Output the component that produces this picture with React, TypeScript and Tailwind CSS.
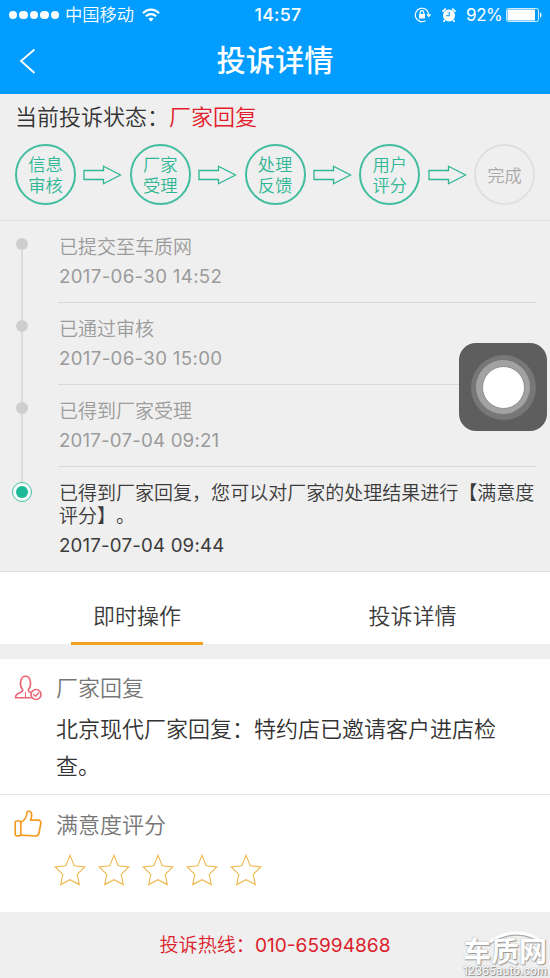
import React from "react";

const steps = [
  { a: "信息", b: "审核", done: true },
  { a: "厂家", b: "受理", done: true },
  { a: "处理", b: "反馈", done: true },
  { a: "用户", b: "评分", done: true },
  { a: "完成", b: "", done: false },
];

const events = [
  { text: "已提交至车质网", date: "2017-06-30 14:52" },
  { text: "已通过审核", date: "2017-06-30 15:00" },
  { text: "已得到厂家受理", date: "2017-07-04 09:21" },
  {
    text: "已得到厂家回复，您可以对厂家的处理结果进行【满意度评分】。",
    date: "2017-07-04 09:44",
  },
];

function StatusBar() {
  return (
    <div className="flex h-[30px] items-center pl-[9px] pr-[8px] text-[17.3px] leading-[30px]">
      <div className="flex w-[243px] items-center">
        <div className="flex gap-[2px]">
          {[0, 1, 2, 3, 4].map((i) => (
            <span key={i} className="size-[8.4px] rounded-full bg-white" />
          ))}
        </div>
        <span className="ml-[6px]">中国移动</span>
        <svg className="ml-[8px]" width="18" height="14" viewBox="0 0 18 14" fill="none" stroke="white" strokeWidth="2.2">
          <path d="M1 5.2C5.5.4 12.500.4 17 5.200" />
          <path d="M3.900 8.300c2.900-2.900 7.300-2.900 10.200 0" />
          <path d="M9 13.600 6.300 10.800c1.500-1.400 3.900-1.400 5.400 0Z" fill="white" stroke="none" />
        </svg>
      </div>
      <span className="w-[52px] text-center text-[17.8px] font-medium tracking-[0.300px]">14:57</span>
      <div className="flex flex-1 items-center justify-end">
        <svg width="18" height="16" viewBox="0 0 18 16" fill="none" stroke="white" strokeWidth="1.200">
          <path d="M14.700 7.500A6.700 6.700 0 1 0 11.500 13.700" />
          <path d="m12.200 7.200 2.600 3.200 2.500-3.200Z" fill="white" stroke="none" />
          <rect x="5" y="7" width="6" height="4.500" fill="white" stroke="none" />
          <path d="M6.200 7.200V5.500a1.800 1.800 0 0 1 3.600 0v1.700" />
        </svg>
        <svg className="ml-[9px]" width="16" height="16" viewBox="0 0 16 16">
          <circle cx="8" cy="8.400" r="6" fill="white" />
          <path d="M1.400 4.600 4.800 1.600M14.600 4.600l-3.400-3M3.800 13l-1.300 1.700M12.200 13l1.300 1.700" stroke="white" strokeWidth="1.700" />
          <path d="M8.200 4.700v4H5" stroke="#0a9cfa" strokeWidth="1.100" fill="none" />
        </svg>
        <span className="ml-[9px] w-[36px] text-[17px] tracking-[-0.4px]">92%</span>
        <svg className="ml-[4px]" width="36" height="14" viewBox="0 0 36 14">
          <rect x=".5" y=".5" width="32" height="13" rx="1.800" fill="none" stroke="white" strokeOpacity=".8" />
          <rect x="1.500" y="1.500" width="27.500" height="11" rx=".8" fill="white" />
          <path d="M34 4.500c2 .5 2 4.500 0 5Z" fill="white" />
        </svg>
      </div>
    </div>
  );
}

function Header() {
  return (
    <header className="h-[94px] bg-[#039dff] text-white">
      <StatusBar />
      <div className="flex h-[62px] items-center">
        <svg className="ml-[19px]" width="18" height="26" viewBox="0 0 18 26" fill="none" stroke="white" strokeWidth="1.800">
          <path d="M15.500 1.500 2 13l13.500 12" />
        </svg>
        <h1 className="mr-[37px] flex-1 text-center font-['Inter','Noto_Sans_CJK_SC',sans-serif] text-[29.300px] font-medium leading-[62px]">投诉详情</h1>
      </div>
    </header>
  );
}

function StepArrow() {
  return (
    <svg width="39" height="20" viewBox="0 0 39 20" fill="none" stroke="#2fb795" strokeWidth="1.300">
      <path d="M1 5.500h19.500V1.200L37.500 10 20.500 18.800v-4.300H1Z" />
    </svg>
  );
}

function Progress() {
  return (
    <section className="h-[127px] border-b border-[#e1e1e1] px-[15px]">
      <p className="pt-[7px] text-[22px] leading-[32px]">
        当前投诉状态：<span className="text-[#e31c2b]">厂家回复</span>
      </p>
      <div className="mt-[11px] flex items-center justify-between">
        {steps.map((s, i) => (
          <React.Fragment key={s.a}>
            {i > 0 && <StepArrow />}
            <div
              className={
                "flex size-[61px] flex-col items-center justify-center rounded-full border-2 pt-px text-[17.300px] leading-[21px] " +
                (s.done ? "border-[#43bd9f] text-[#2fb795]" : "border-[#dfdfdf] text-[#aaaaaa]")
              }
            >
              <span>{s.a}</span>
              {s.b && <span>{s.b}</span>}
            </div>
          </React.Fragment>
        ))}
      </div>
    </section>
  );
}

function Timeline() {
  return (
    <section className="h-[351px] border-b border-[#e1e1e1]">
      {events.map((e, i) => {
        const last = i === events.length - 1;
        return (
          <div key={e.date} className="flex pr-[14px]">
            <div className="flex w-[44px] flex-col items-center">
              <span className={"w-[1.500px] " + (last ? "h-[15px] " : "h-[17px] ") + (i > 0 ? "bg-[#dcdcdc]" : "")} />
              {last ? (
                <span className="flex size-[20px] items-center justify-center rounded-full border border-[#48bea2] bg-[#f3fcfa]">
                  <span className="size-[12px] rounded-full bg-[#1eb899]" />
                </span>
              ) : (
                <>
                  <span className="size-[12px] rounded-full bg-[#cecece]" />
                  <span className="w-[1.500px] flex-1 bg-[#dcdcdc]" />
                </>
              )}
            </div>
            <div
              className={
                "ml-[14px] flex-1 pt-[15px] text-[19.030px] leading-[23px] " +
                (last ? "text-[#3b3b3b]" : "h-[82px] border-b border-[#d9d9d9] text-[#9b9b9b]")
              }
            >
              <p className="pl-px [text-spacing-trim:space-all]">{e.text}</p>
              <p className={"mt-[6px] pl-px text-[18.700px] " + (i > 1 ? "tracking-[0.180px]" : "tracking-[0.320px]")}>{e.date}</p>
            </div>
          </div>
        );
      })}
    </section>
  );
}

function Tabs() {
  return (
    <nav className="flex h-[72px] bg-white text-[22px] leading-[88px] text-[#3b3b3b]">
      <div className="flex w-1/2 flex-col items-center pr-px">
        <span className="h-[70px]">即时操作</span>
        <span className="h-[3px] w-[132px] shrink-0 bg-[#f1a01f]" />
      </div>
      <div className="w-1/2 text-center">投诉详情</div>
    </nav>
  );
}

function Reply() {
  return (
    <section className="flex h-[136px] border-b border-[#e6e6e6] bg-white pl-[14px]">
      <svg className="mt-[16px] shrink-0" width="29" height="26" viewBox="0 0 29 26" fill="none" stroke="#ea6474" strokeWidth="1.600" strokeLinecap="round" strokeLinejoin="round">
        <path d="M17 22.800H1.500C1.300 19.200 4 18.400 6.500 17.400 9.400 16.300 8.900 14.600 7.800 13.200 5.600 10.400 5.800 1.200 11.500 1.200s5.900 9.200 3.700 12c-1.200 1.600-1.600 3 1.300 4.200" />
        <path d="m11.500 17.500v4" strokeWidth="1.100" />
        <circle cx="22" cy="19.500" r="5" />
        <path d="m19.500 19.500 2 1.700 3.200-3.500" strokeWidth="1.300" />
      </svg>
      <div className="ml-[13px] w-[450px] text-[22px]">
        <h2 className="pt-[11px] leading-[36px] text-[#777777]">厂家回复</h2>
        <p className="mt-[5px] leading-[37px] text-[#333333]">北京现代厂家回复：特约店已邀请客户进店检查。</p>
      </div>
    </section>
  );
}

function Rating() {
  return (
    <section className="h-[117px] bg-white pl-[14px]">
      <div className="flex items-start">
        <svg className="mt-[15px]" width="29" height="28" viewBox="0 0 29 28" fill="none" stroke="#f39b24" strokeWidth="1.700" strokeLinejoin="round">
          <rect x="1.200" y="11" width="5.600" height="14.800" rx="1.500" />
          <path d="M6.800 12.500c3.400-1.800 5.600-5 6.200-9.500.3-2.700 4.300-2.300 4.600 1.300.2 2.300-.4 4.300-1 5.900h7.300c2.500 0 3.200 1.500 2.900 3.200l-1.800 9.600c-.4 2.100-1.400 3-3.400 3L6.800 25.200" />
        </svg>
        <h2 className="ml-[13px] pt-[12px] text-[22px] leading-[36px] text-[#777777]">满意度评分</h2>
      </div>
      <div className="ml-[40px] mt-[11px] flex gap-[12px]">
        {[0, 1, 2, 3, 4].map((i) => (
          <svg key={i} width="32" height="32" viewBox="0 0 32 32" fill="none" stroke="#efb84c" strokeWidth="1.100">
            <path d="m16 1.300 4.200 10.400 10.600 1.200-7.600 7.500 2.100 10.200L16 25.700l-9.300 4.900 2.100-10.200L1.200 12.900l10.600-1.200Z" />
          </svg>
        ))}
      </div>
    </section>
  );
}

function AssistiveTouch() {
  return (
    <div className="absolute left-[459px] top-[343px] flex size-[88px] items-center justify-center rounded-[17px] bg-[#5e5e5e]">
      <div className="flex size-[65px] items-center justify-center rounded-full bg-[#777777]">
        <div className="flex size-[54px] items-center justify-center rounded-full bg-[#a2a2a2]">
          <div className="size-[43px] rounded-full border border-[#8b8b8b] bg-white" />
        </div>
      </div>
    </div>
  );
}

function Watermark() {
  return (
    <div className="absolute left-[463px] top-[930px] flex h-[48px] w-[87px] flex-col pt-[9px] font-['Inter','Noto_Sans_CJK_SC',sans-serif] text-white">
      <svg className="absolute left-[24px] top-0" width="60" height="18" viewBox="0 0 60 18" fill="none">
        <path d="M2 13.500C18 1 42 0 57 15" stroke="#aaaaaa" strokeWidth="3.500" />
        <path d="M2 12.500C18 0 42-1 57 14" stroke="white" strokeWidth="3" />
      </svg>
      <p className="relative h-[26px] whitespace-nowrap text-[28px] font-bold leading-[26px] [text-shadow:0_0_1px_#888,1px_1px_1px_#999]">车质网</p>
      <p className="relative h-[12px] whitespace-nowrap text-[11.400px] font-medium leading-[13px] [text-shadow:0_0_1px_#777,1px_1px_1px_#888]">12365auto.com</p>
    </div>
  );
}

export default function App() {
  return (
    <div className="relative h-[978px] w-[550px] overflow-hidden bg-[#efefef] font-['Inter','Noto_Sans_CJK_SC_DemiLight','Noto_Sans_CJK_SC',sans-serif] text-[#333333]">
      <Header />
      <Progress />
      <Timeline />
      <Tabs />
      <div className="h-[15px]" />
      <Reply />
      <Rating />
      <footer className="text-center text-[19.100px] leading-[67px] text-[#dc1f2d]">投诉热线：010-65994868</footer>
      <AssistiveTouch />
      <Watermark />
    </div>
  );
}
